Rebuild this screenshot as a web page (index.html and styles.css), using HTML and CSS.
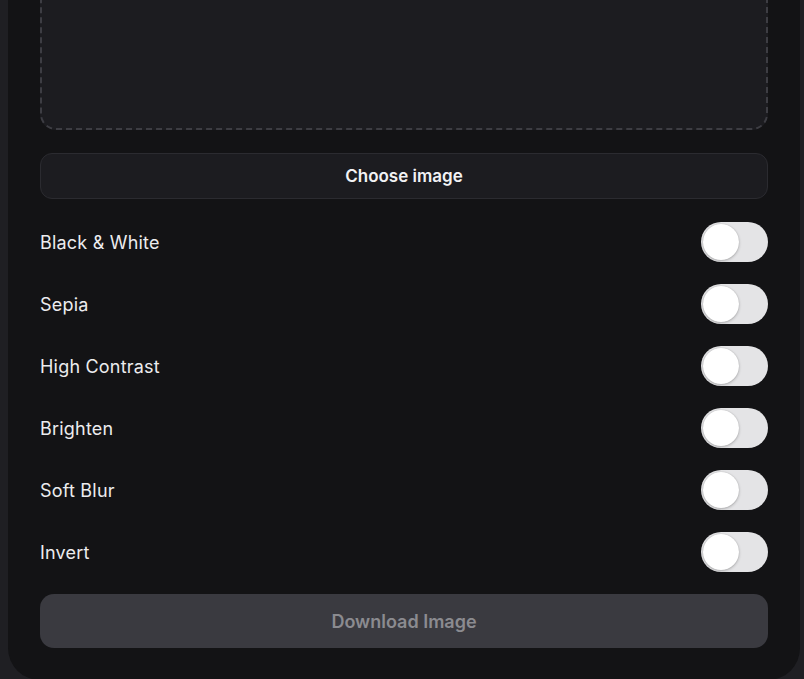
FILE: index.html
```html
<!DOCTYPE html>
<html>
<head>
<meta name="viewport" content="width=device-width, initial-scale=1">
<link rel="stylesheet" href="styles.css">
</head>
<body>

<div class="page">
  <div class="card">
    <div class="dropzone" id="dropzone"></div>

    <button class="chooseBtn" id="chooseButton">Choose image</button>

    <div class="filters">
      <label class="filterRow">
        <span>Black &amp; White</span>
        <input type="checkbox" class="switch" data-filter="grayscale(1)">
      </label>
      <label class="filterRow">
        <span>Sepia</span>
        <input type="checkbox" class="switch" data-filter="sepia(1)">
      </label>
      <label class="filterRow">
        <span>High Contrast</span>
        <input type="checkbox" class="switch" data-filter="contrast(1.6)">
      </label>
      <label class="filterRow">
        <span>Brighten</span>
        <input type="checkbox" class="switch" data-filter="brightness(1.3)">
      </label>
      <label class="filterRow">
        <span>Soft Blur</span>
        <input type="checkbox" class="switch" data-filter="blur(2px)">
      </label>
      <label class="filterRow">
        <span>Invert</span>
        <input type="checkbox" class="switch" data-filter="invert(1)">
      </label>
    </div>

    <button class="downloadBtn" id="downloadButton" disabled>Download Image</button>
  </div>
</div>

</body>
</html>
```

FILE: styles.css
```css
body {
  margin: 0;
  background: #1f1f23;
}

* {
  box-sizing: border-box;
  font-family: Inter, 'Liberation Sans', sans-serif;
}

/* Keep the card pinned to the bottom of the window */
.page {
  height: 100vh;
  overflow: hidden;
  display: flex;
  flex-direction: column;
  justify-content: flex-end;
  padding: 0 4px 0 8px;
}

.card {
  flex-shrink: 0;
  background: #131315;
  border-radius: 32px;
  padding: 32px;
  margin-bottom: -1px;
  display: flex;
  flex-direction: column;
  gap: 22px;
}

/* Drop area for the picture */
.dropzone {
  height: 320px;
  background: #1c1c20;
  border: 2px dashed #3d3d43;
  border-radius: 16px;
  margin-bottom: 1px;
}

.chooseBtn {
  height: 46px;
  margin-bottom: 1px;
  background: #1c1c20;
  border: 1px solid #2b2b30;
  border-radius: 12px;
  color: #f2f2f4;
  font-size: 17px;
  font-weight: 600;
  cursor: pointer;
}

/* Filter list */
.filters {
  display: flex;
  flex-direction: column;
  gap: 22px;
}

.filterRow {
  display: flex;
  align-items: center;
  justify-content: space-between;
  height: 40px;
  color: #ececee;
  font-size: 18px;
  letter-spacing: 0.2px;
  cursor: pointer;
}

/* Toggle switch */
.switch {
  appearance: none;
  -webkit-appearance: none;
  position: relative;
  margin: 0;
  width: 67px;
  height: 40px;
  border-radius: 20px;
  background: #e4e4e6;
  cursor: pointer;
  transition: 0.2s;
}

.switch::before {
  content: "";
  position: absolute;
  top: 2px;
  left: 2px;
  width: 36px;
  height: 36px;
  border-radius: 50%;
  background: #fff;
  box-shadow: 0 1px 3px rgba(0, 0, 0, 0.25), 0 0 1px rgba(0, 0, 0, 0.2);
  transition: 0.2s;
}

.switch:checked {
  background: #34c759;
}

.switch:checked::before {
  left: 29px;
}

.downloadBtn {
  height: 54px;
  background: #3a3a40;
  border: none;
  border-radius: 14px;
  color: #8b8b90;
  font-size: 18px;
  font-weight: 600;
}
```
